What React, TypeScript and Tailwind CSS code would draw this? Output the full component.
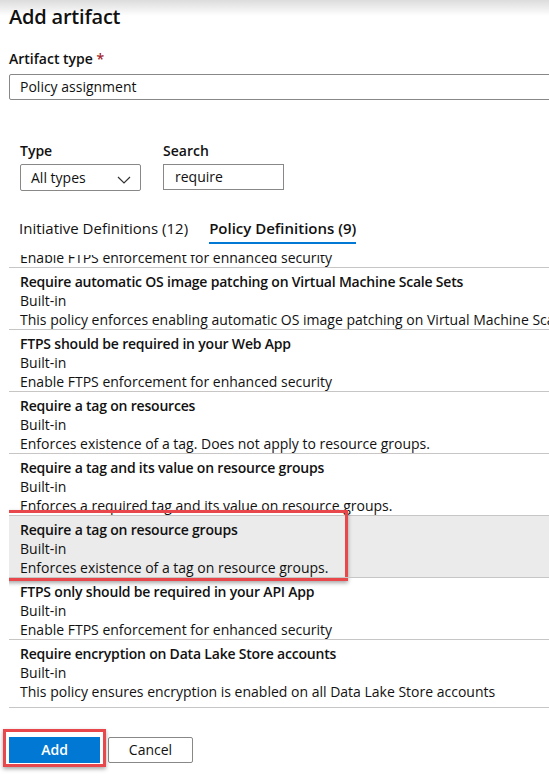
import React from "react";

type Item = { title: string; desc: string; selected?: boolean };

const items: Item[] = [
  { title: "FTPS should be required in your Function App", desc: "Enable FTPS enforcement for enhanced security" },
  { title: "Require automatic OS image patching on Virtual Machine Scale Sets", desc: "This policy enforces enabling automatic OS image patching on Virtual Machine Scale Sets to always keep Virtual Machines secure" },
  { title: "FTPS should be required in your Web App", desc: "Enable FTPS enforcement for enhanced security" },
  { title: "Require a tag on resources", desc: "Enforces existence of a tag. Does not apply to resource groups." },
  { title: "Require a tag and its value on resource groups", desc: "Enforces a required tag and its value on resource groups." },
  { title: "Require a tag on resource groups", desc: "Enforces existence of a tag on resource groups.", selected: true },
  { title: "FTPS only should be required in your API App", desc: "Enable FTPS enforcement for enhanced security" },
  { title: "Require encryption on Data Lake Store accounts", desc: "This policy ensures encryption is enabled on all Data Lake Store accounts" },
];

export default function App() {
  return (
    <div
      className="relative w-[549px] h-[776px] overflow-hidden bg-[linear-gradient(to_bottom,#dcdcdc_0px,#ffffff_16px)] text-[#111] text-[14px]"
      style={{ fontFamily: "'Open Sans', 'Noto Sans', sans-serif" }}
    >
      <div className="pl-[9px] pt-[3px] text-[20px] leading-[28px] font-semibold tracking-[-0.2px]">Add artifact</div>

      <div className="pl-[9px] mt-[18px] leading-[20px] font-semibold">
        Artifact type <span className="text-[#a4262c]">*</span>
      </div>
      <div className="ml-[9px] mt-[5px] w-[560px] h-[26px] border border-[#8a8886] rounded-[2px] flex items-center pl-[10px] leading-[20px]">
        Policy assignment
      </div>

      <div className="flex gap-[22px] pl-[20px] mt-[41px]">
        <div className="flex flex-col">
          <div className="leading-[20px] font-semibold">Type</div>
          <div className="mt-[3px] w-[121px] h-[27px] border border-[#8a8886] rounded-[2px] flex items-center justify-between pl-[10px] pr-[9px]">
            <span className="leading-[20px]">All types</span>
            <svg width="14" height="8" viewBox="0 0 14 8" className="mt-[5px]">
              <path d="M1 1 L7 7 L13 1" fill="none" stroke="#333" strokeWidth="1.2" />
            </svg>
          </div>
        </div>
        <div className="flex flex-col">
          <div className="leading-[20px] font-semibold">Search</div>
          <div className="mt-[3px] w-[121px] h-[26px] border border-[#8a8886] flex items-center pl-[11px]">
            <span className="leading-[20px]">require</span>
          </div>
        </div>
      </div>

      <div className="flex items-start h-[26px] pl-[19px] mt-[27px] gap-[21px] leading-[20px] text-[15px]">
        <div>Initiative Definitions (12)</div>
        <div className="pb-[4px] font-semibold border-b-2 border-[#0078d4]">Policy Definitions (9)</div>
      </div>

      <div className="mt-[11px] h-[453px] ml-[9px] overflow-hidden border-b border-[#c8c6c4]">
        <div className="-mt-[50px]">
          {items.map((it, i) => (
            <div
              key={i}
              className={`relative h-[62px] border-t border-[#c8c6c4] pt-[4px] pl-[11px] leading-[19px] whitespace-nowrap ${it.selected ? "bg-[#ebebeb] border-[#b0b0b0]" : ""}`}
            >
              <div className="font-semibold tracking-[-0.2px]">{it.title}</div>
              <div>Built-in</div>
              <div>{it.desc}</div>
              {it.selected && (
                <div className="absolute left-[-6px] top-[-6px] w-[345px] h-[71px] border-[3px] border-[#e8474c] shadow-[0_2px_4px_rgba(0,0,0,0.35)]" />
              )}
            </div>
          ))}
        </div>
      </div>

      <div className="flex pl-[9px] mt-[29px] gap-[8px]">
        <div className="relative">
          <button className="w-[91px] h-[26px] bg-[#0078d4] text-white font-semibold leading-[20px]">Add</button>
          <div className="absolute left-[-6px] top-[-8px] w-[103px] h-[38px] border-[3px] border-[#e8474c] shadow-[0_2px_4px_rgba(0,0,0,0.35)]" />
        </div>
        <button className="w-[85px] h-[26px] border border-[#8a8886] rounded-[2px] leading-[20px]">Cancel</button>
      </div>
    </div>
  );
}
